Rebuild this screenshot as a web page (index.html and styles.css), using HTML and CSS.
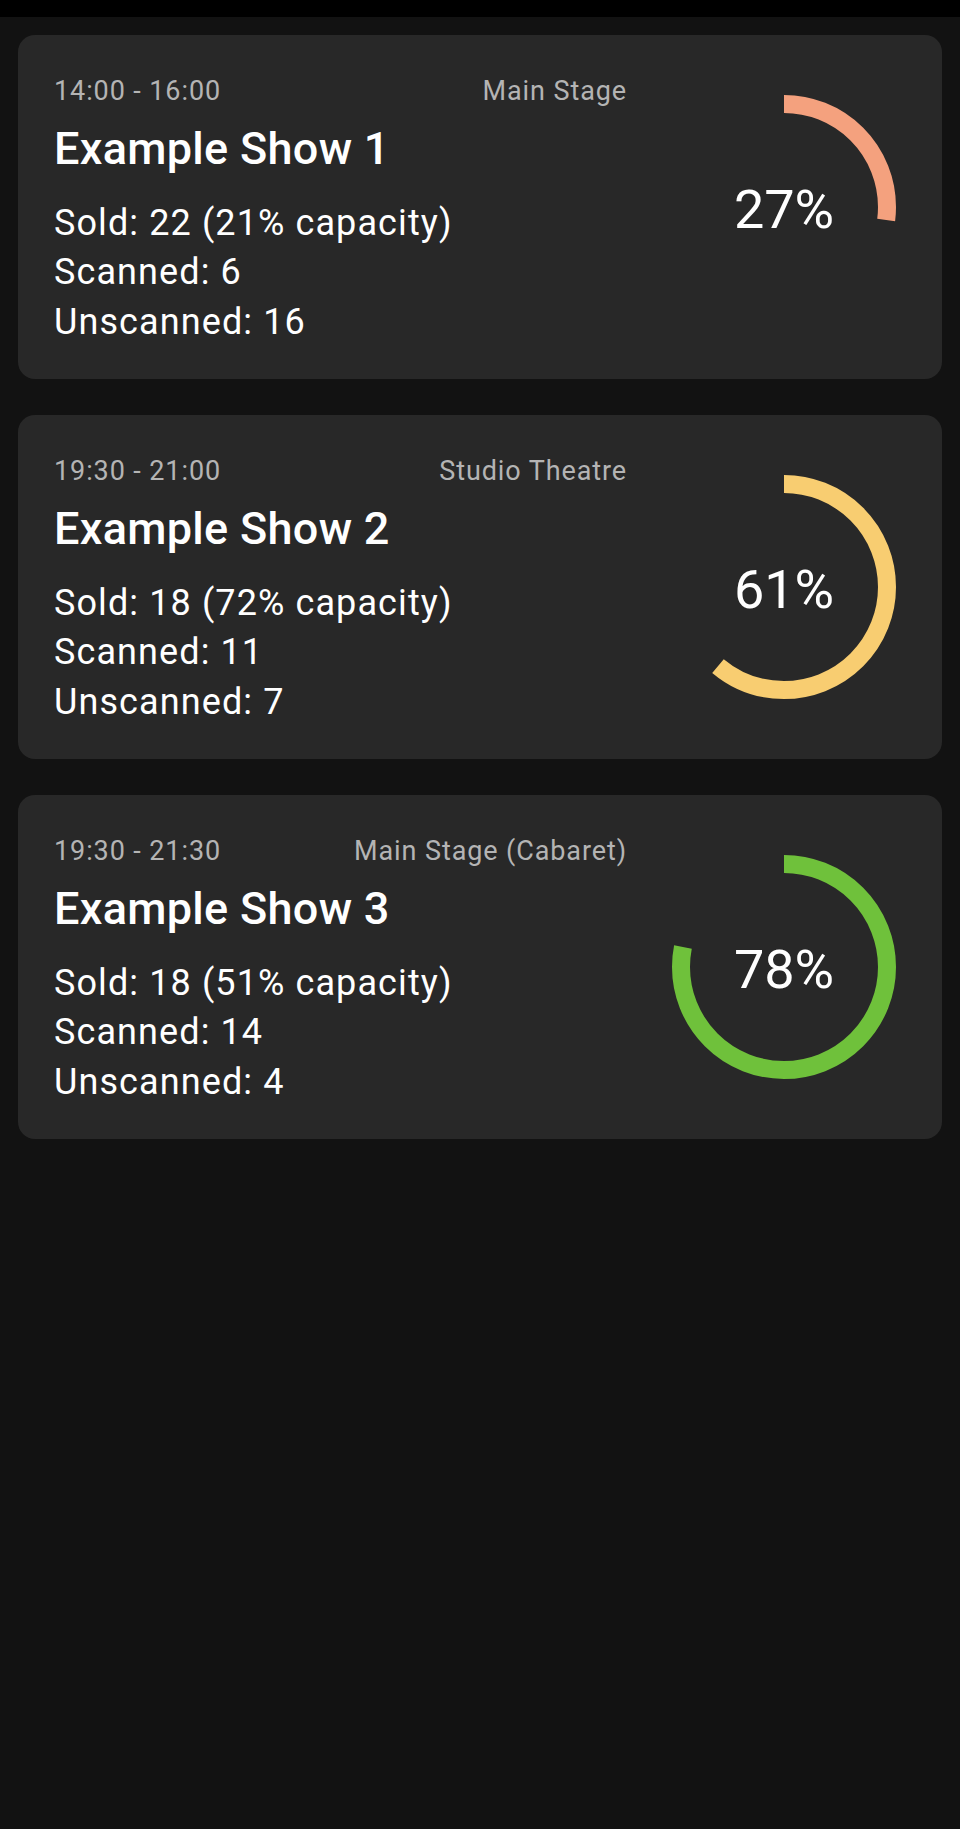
FILE: index.html
```html
<!DOCTYPE html>
<html lang="en">
<head>
<meta charset="utf-8">
<title>Shows</title>
<link rel="stylesheet" href="styles.css">
</head>
<body>
<div class="status-bar"></div>
<main class="list">
  <section class="card">
    <div class="info">
      <div class="meta"><span class="time">14:00 - 16:00</span><span class="venue">Main Stage</span></div>
      <h2 class="title">Example Show 1</h2>
      <p class="stat">Sold: 22 (21% capacity)</p>
      <p class="stat">Scanned: 6</p>
      <p class="stat">Unscanned: 16</p>
    </div>
    <div class="ring">
      <svg class="ring-svg" viewBox="0 0 224 224" width="224" height="224">
        <circle class="arc arc-salmon" cx="112" cy="112" r="103" stroke-dasharray="174.74 1000" transform="rotate(-90 112 112)"/>
      </svg>
      <span class="pct">27%</span>
    </div>
  </section>
  <section class="card">
    <div class="info">
      <div class="meta"><span class="time">19:30 - 21:00</span><span class="venue">Studio Theatre</span></div>
      <h2 class="title">Example Show 2</h2>
      <p class="stat">Sold: 18 (72% capacity)</p>
      <p class="stat">Scanned: 11</p>
      <p class="stat">Unscanned: 7</p>
    </div>
    <div class="ring">
      <svg class="ring-svg" viewBox="0 0 224 224" width="224" height="224">
        <circle class="arc arc-yellow" cx="112" cy="112" r="103" stroke-dasharray="394.77 1000" transform="rotate(-90 112 112)"/>
      </svg>
      <span class="pct">61%</span>
    </div>
  </section>
  <section class="card">
    <div class="info">
      <div class="meta"><span class="time">19:30 - 21:30</span><span class="venue">Main Stage (Cabaret)</span></div>
      <h2 class="title">Example Show 3</h2>
      <p class="stat">Sold: 18 (51% capacity)</p>
      <p class="stat">Scanned: 14</p>
      <p class="stat">Unscanned: 4</p>
    </div>
    <div class="ring">
      <svg class="ring-svg" viewBox="0 0 224 224" width="224" height="224">
        <circle class="arc arc-green" cx="112" cy="112" r="103" stroke-dasharray="504.79 1000" transform="rotate(-90 112 112)"/>
      </svg>
      <span class="pct">78%</span>
    </div>
  </section>
</main>
</body>
</html>
```
FILE: styles.css
```css
html, body {
  margin: 0;
  padding: 0;
  background: #121212;
  min-height: 100%;
}
body {
  font-family: Roboto, "Liberation Sans", sans-serif;
  color: #ffffff;
  width: 960px;
  min-height: 1829px;
}
.status-bar {
  height: 17px;
  background: #000000;
}
.list {
  display: flex;
  flex-direction: column;
  gap: 36px;
  padding: 18px 18px 0 18px;
}
.card {
  display: flex;
  align-items: center;
  background: #282828;
  border-radius: 17px;
  padding: 36px 36px 32px 36px;
}
.info {
  flex: 1;
  min-width: 0;
}
.meta {
  display: flex;
  justify-content: space-between;
  font-size: 27px;
  line-height: 40px;
  letter-spacing: 0.9px;
  color: #b4b4b4;
}
.title {
  margin: 8px 0 19.5px 0;
  font-size: 45px;
  line-height: 60px;
  font-weight: 500;
  letter-spacing: 0.3px;
  color: #ffffff;
}
.stat {
  margin: 0;
  font-size: 36px;
  line-height: 49.5px;
  letter-spacing: 1.1px;
  color: #ffffff;
}
.ring {
  display: grid;
  place-items: center;
  width: 224px;
  height: 224px;
  margin: 0 10px 5px 45px;
  flex: none;
}
.ring-svg {
  grid-area: 1 / 1;
  display: block;
}
.arc {
  fill: none;
  stroke-width: 18;
  stroke-linecap: butt;
}
.arc-salmon { stroke: #f4a17e; }
.arc-yellow { stroke: #f8cd71; }
.arc-green { stroke: #6fc13b; }
.pct {
  grid-area: 1 / 1;
  font-size: 54px;
  line-height: 64px;
  padding-top: 6px;
  color: #ffffff;
}
```
